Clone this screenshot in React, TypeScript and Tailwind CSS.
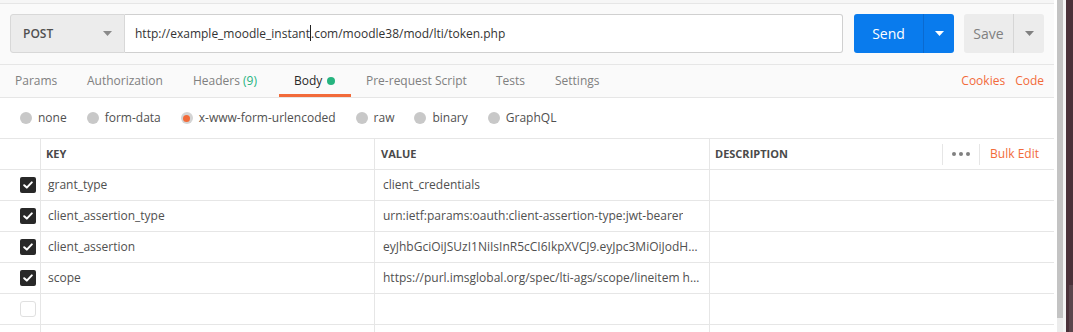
import React from "react";

const rows = [
  { key: "grant_type", value: "client_credentials" },
  { key: "client_assertion_type", value: "urn:ietf:params:oauth:client-assertion-type:jwt-bearer" },
  {
    key: "client_assertion",
    value:
      "eyJhbGciOiJSUzI1NiIsInR5cCI6IkpXVCJ9.eyJpc3MiOiJodHRwczovL2V4YW1wbGUuY29tIiwic3ViIjoiMTIzNDU2In0",
  },
  {
    key: "scope",
    value:
      "https://purl.imsglobal.org/spec/lti-ags/scope/lineitem https://purl.imsglobal.org/spec/lti-ags/scope/score",
  },
];

function Caret({ color }: { color: string }) {
  return (
    <svg width="9" height="5" viewBox="0 0 9 5">
      <path d="M0 0 L9 0 L4.5 5 Z" fill={color} />
    </svg>
  );
}

function Check({ checked }: { checked: boolean }) {
  if (!checked)
    return <div className="w-[16px] h-[16px] rounded-[3px] border border-[#e0e0e0] bg-white" />;
  return (
    <div className="w-[16px] h-[16px] rounded-[2px] bg-[#282828] flex items-center justify-center">
      <svg width="10" height="8" viewBox="0 0 10 8">
        <path d="M1.2 4.2 L3.8 6.6 L8.8 1.4" fill="none" stroke="white" strokeWidth="2" strokeLinecap="round" strokeLinejoin="round" />
      </svg>
    </div>
  );
}

function Radio({ label, selected }: { label: string; selected?: boolean }) {
  return (
    <div className="flex items-center gap-[6px]">
      {selected ? (
        <div className="w-[12px] h-[12px] rounded-full bg-[#d4d4d4] flex items-center justify-center">
          <div className="w-[7px] h-[7px] rounded-full bg-[#f26b3a]" />
        </div>
      ) : (
        <div className="w-[12px] h-[12px] rounded-full bg-[#c8c8c8]" />
      )}
      <span className="text-[12px] text-[#505050]">{label}</span>
    </div>
  );
}

export default function App() {
  const tabs: { label: React.ReactNode; w: string; active?: boolean }[] = [
    { label: "Params", w: "w-[72px]" },
    { label: "Authorization", w: "w-[106px]" },
    {
      label: (
        <span>
          Headers <span className="text-[#26b47f]">(9)</span>
        </span>
      ),
      w: "w-[101px]",
    },
    {
      label: (
        <span className="flex items-center gap-[5px]">
          <span>Body</span> <span className="w-[8px] h-[8px] rounded-full bg-[#26b47f] inline-block" />
        </span>
      ),
      w: "w-[72px]",
      active: true,
    },
    { label: "Pre-request Script", w: "w-[130px]" },
    { label: "Tests", w: "w-[59px]" },
    { label: "Settings", w: "w-[80px]" },
  ];

  return (
    <div className="w-[1073px] h-[332px] overflow-hidden flex font-['Open_Sans',sans-serif] bg-white">
      <div className="w-[1054px] shrink-0">
        <div className="h-[4px] bg-[#f6f6f6] border-b border-[#e6e6e6]" />
        <div className="bg-[#fafafa] pt-[10px] pb-[11px] px-[10px] border-b border-[#e6e6e6] flex items-center">
          <div className="w-[115px] h-[39px] bg-[#ececec] border border-[#d8d8d8] rounded-l-[3px] flex items-center justify-between pl-[12px] pr-[12px]">
            <span className="text-[12px] font-semibold text-[#505050]">POST</span>
            <Caret color="#8a8a8a" />
          </div>
          <div className="w-[718px] h-[39px] bg-white border border-l-0 border-[#d0d0d0] rounded-r-[3px] flex items-center pl-[10px]">
            <span className="text-[12px] text-[#333333] whitespace-nowrap">
              http://example_moodle_instant
              <span className="inline-block w-0 h-[16px] border-l border-[#222] align-middle -mt-[2px]" />
              .com/moodle38/mod/lti/token.php
            </span>
          </div>
          <div className="ml-[11px] w-[100px] h-[39px] bg-[#097bed] rounded-[3px] flex">
            <div className="w-[69px] flex items-center justify-center text-white text-[14px]">Send</div>
            <div className="w-px bg-[#0a6ad0]" />
            <div className="flex-1 flex items-center justify-center">
              <Caret color="#ffffff" />
            </div>
          </div>
          <div className="ml-[10px] w-[80px] h-[39px] bg-[#ececec] rounded-[3px] flex">
            <div className="w-[49px] flex items-center justify-center text-[#808080] text-[14px]">Save</div>
            <div className="w-px bg-[#d6d6d6]" />
            <div className="flex-1 flex items-center justify-center">
              <Caret color="#808080" />
            </div>
          </div>
        </div>
        <div className="bg-[#fafafa] h-[33px] border-b border-[#e6e6e6] flex items-stretch">
          {tabs.map((t, i) => (
            <div key={i} className={`${t.w} relative flex items-center pl-[15px] text-[12px] ${t.active ? "text-[#282828]" : "text-[#808080]"}`}>
              {t.label}
              {t.active && <div className="absolute left-0 right-0 bottom-0 h-[3px] bg-[#f26b3a]" />}
            </div>
          ))}
          <div className="flex-1" />
          <div className="flex items-center gap-[10px] pr-[10px] text-[12px] text-[#f26b3a]">
            <span>Cookies</span>
            <span>Code</span>
          </div>
        </div>
        <div className="h-[41px] border-b border-[#e6e6e6] flex items-center pl-[20px] gap-[20px]">
          <Radio label="none" />
          <Radio label="form-data" />
          <Radio label="x-www-form-urlencoded" selected />
          <Radio label="raw" />
          <Radio label="binary" />
          <Radio label="GraphQL" />
        </div>
        <div className="grid grid-cols-[41px_334px_335px_1fr] text-[12px]">
          <div className="h-[31px] border-r border-b border-[#e6e6e6]" />
          <div className="h-[31px] border-r border-b border-[#e6e6e6] flex items-center pl-[5px] text-[11px] font-bold text-[#4a4a4a]">KEY</div>
          <div className="h-[31px] border-r border-b border-[#e6e6e6] flex items-center pl-[6px] text-[11px] font-bold text-[#4a4a4a]">VALUE</div>
          <div className="h-[31px] border-b border-[#e6e6e6] flex items-center pl-[5px] text-[11px] font-bold text-[#4a4a4a]">
            <span className="flex-1">DESCRIPTION</span>
            <div className="h-[21px] border-l border-[#e6e6e6]" />
            <div className="w-[36px] flex items-center justify-center gap-[3px]">
              <span className="w-[4px] h-[4px] rounded-full bg-[#808080]" />
              <span className="w-[4px] h-[4px] rounded-full bg-[#808080]" />
              <span className="w-[4px] h-[4px] rounded-full bg-[#808080]" />
            </div>
            <div className="h-[21px] border-l border-[#e6e6e6]" />
            <span className="pl-[10px] pr-[15px] text-[12px] font-normal text-[#f26b3a]">Bulk Edit</span>
          </div>
          {rows.map((r) => (
            <React.Fragment key={r.key}>
              <div className="h-[31px] border-r border-b border-[#e6e6e6] flex items-center pl-[20px]">
                <Check checked />
              </div>
              <div className="h-[31px] border-r border-b border-[#e6e6e6] flex items-center pl-[7px] text-[#505050]">{r.key}</div>
              <div className="h-[31px] border-r border-b border-[#e6e6e6] flex items-center pl-[8px] pr-[8px] text-[#505050] min-w-0">
                <span className="truncate">{r.value}</span>
              </div>
              <div className="h-[31px] border-b border-[#e6e6e6]" />
            </React.Fragment>
          ))}
          <div className="h-[31px] border-r border-b border-[#e6e6e6] flex items-center pl-[20px]">
            <Check checked={false} />
          </div>
          <div className="h-[31px] border-r border-b border-[#e6e6e6]" />
          <div className="h-[31px] border-r border-b border-[#e6e6e6]" />
          <div className="h-[31px] border-b border-[#e6e6e6]" />
          <div className="h-[31px] border-r border-[#e6e6e6]" />
          <div className="h-[31px] border-r border-[#e6e6e6]" />
          <div className="h-[31px] border-r border-[#e6e6e6]" />
          <div className="h-[31px]" />
        </div>
      </div>
      <div className="flex-1 flex">
        <div className="w-[3px] bg-white" />
        <div className="w-[6px] flex flex-col">
          <div className="h-[318px] bg-[#c3c3c3]" />
          <div className="flex-1 bg-[#ececec]" />
        </div>
        <div className="w-[3px] bg-[#f4f4f4]" />
        <div className="flex-1 bg-[#4a3139] flex flex-col">
          <div className="h-[285px]" />
          <div className="flex-1 ml-[3px] bg-[#5a454c]" />
        </div>
      </div>
    </div>
  );
}
